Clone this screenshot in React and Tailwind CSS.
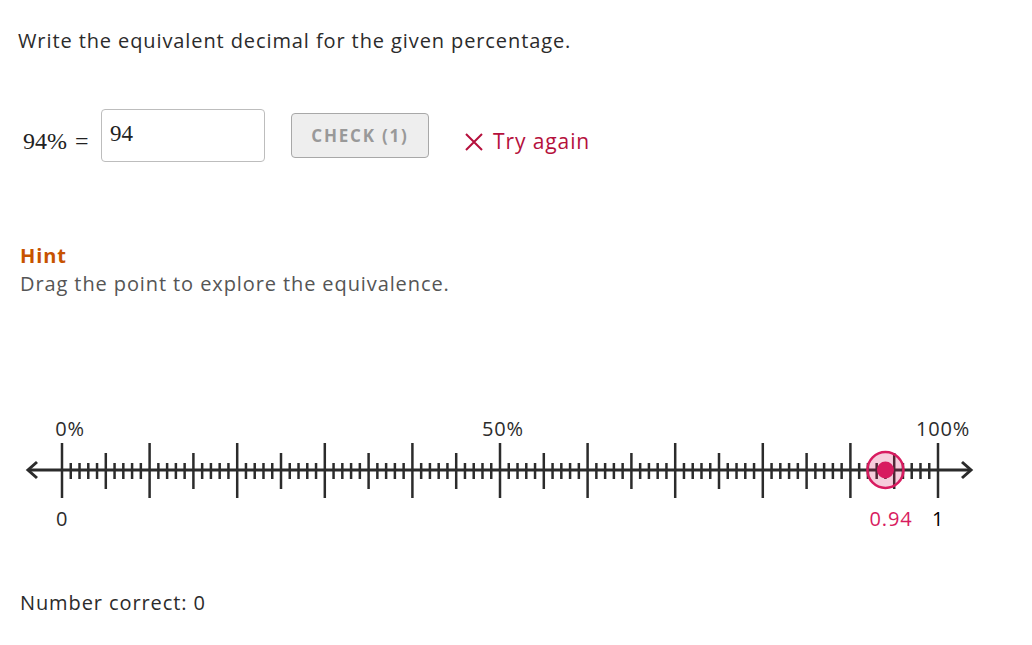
import React from "react";

const SANS = "'Open Sans', 'Noto Sans', sans-serif";

function NumberLine() {
  const x0 = 62;
  const x1 = 938;
  const y = 468;
  const ticks = [];
  for (let i = 0; i <= 100; i++) {
    const x = x0 + ((x1 - x0) * i) / 100;
    let t;
    if (i % 10 === 0) t = [441, 496];
    else if (i % 5 === 0) t = [451, 487];
    else t = [461, 477];
    ticks.push(
      <line key={i} x1={x} x2={x} y1={t[0]} y2={t[1]} stroke="#2b2b2b" strokeWidth={2.5} />
    );
  }
  const px = x0 + (x1 - x0) * 0.94;
  return (
    <svg width="1032" height="150" viewBox="0 400 1032 150" className="block">
      <line x1="28" x2="971" y1={y} y2={y} stroke="#2b2b2b" strokeWidth="3" />
      <polyline points="37,460 28,468 37,476" fill="none" stroke="#2b2b2b" strokeWidth="3" />
      <polyline points="962,460 971,468 962,476" fill="none" stroke="#2b2b2b" strokeWidth="3" />
      {ticks}
      <circle cx={px} cy={y} r="18" fill="rgba(216,27,96,0.22)" stroke="#d81b60" strokeWidth="2.5" />
      <circle cx={px} cy={y} r="8.5" fill="#d81b60" />
      <g fontFamily={SANS} fontSize="20" fill="#2b2b2b" letterSpacing="0.8">
        <text x="70" y="434" textAnchor="middle">0%</text>
        <text x="503" y="434" textAnchor="middle">50%</text>
        <text x="943" y="434" textAnchor="middle">100%</text>
        <text x="62" y="524" textAnchor="middle">0</text>
        <text x="891" y="524" textAnchor="middle" fill="#d81b60">0.94</text>
        <text x="938" y="524" textAnchor="middle" fill="#000">1</text>
      </g>
    </svg>
  );
}

export default function App() {
  return (
    <div className="w-[1032px] h-[645px] bg-white overflow-hidden text-[#2b2b2b] tracking-[0.9px]" style={{ fontFamily: SANS }}>
      <div className="pt-[27px] pl-[18px] text-[20px] leading-[28px]">
        Write the equivalent decimal for the given percentage.
      </div>
      <div className="flex items-center mt-[54px] h-[53px]">
        <div className="pl-[23px] w-[101px] mt-[10px] text-[24px] text-[#222] flex items-center tracking-normal" style={{ fontFamily: "'Liberation Serif', 'DejaVu Serif', serif" }}>
          <span>94%</span>
          <span className="ml-[8px]">=</span>
        </div>
        <div className="w-[164px] h-[53px] border border-[#bdbdbd] rounded-[4px] pl-[8px] pt-[11px] text-[23px] leading-[26px] text-[#222] tracking-normal" style={{ fontFamily: "'Liberation Serif', 'DejaVu Serif', serif" }}>
          94
        </div>
        <div className="ml-[26px] w-[138px] h-[45px] border border-[#a8a8a8] rounded-[4px] bg-[#eeeeee] flex items-center justify-center text-[17px] font-bold tracking-[1.8px] text-[#999999]">
          CHECK (1)
        </div>
        <div className="ml-[34px] mt-[12px] flex items-center text-[#b5103c] text-[21px]">
          <svg width="22" height="22" viewBox="0 0 22 22" className="mr-[8px]">
            <path d="M3 3 L19 19 M19 3 L3 19" stroke="#b5103c" strokeWidth="2" fill="none" />
          </svg>
          Try again
        </div>
      </div>
      <div className="mt-[80px] pl-[20px] text-[20px] leading-[28px]">
        <div className="font-bold text-[#c75300]">Hint</div>
        <div className="text-[#555555]">Drag the point to explore the equivalence.</div>
      </div>
      <div className="mt-[104px]">
        <NumberLine />
      </div>
      <div className="mt-[37px] pl-[20px] text-[20px] leading-[28px] text-[#2b2b2b]">
        Number correct: 0
      </div>
    </div>
  );
}
